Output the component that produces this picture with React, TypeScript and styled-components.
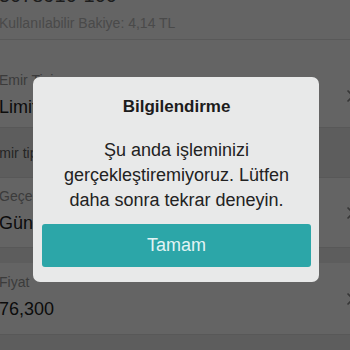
import styled, { createGlobalStyle } from 'styled-components'

const GlobalStyle = createGlobalStyle`
  html, body {
    margin: 0;
    padding: 0;
    width: 350px;
    height: 350px;
    overflow: hidden;
    background: #e8e8e8;
    font-family: 'Liberation Sans', Helvetica, Arial, sans-serif;
  }
`

const Screen = styled.div`
  position: relative;
  width: 350px;
  height: 350px;
  overflow: hidden;
`

const Form = styled.div`
  display: flex;
  flex-direction: column;
  width: 362px;
  margin-left: -1px;
  background: #e8e8e8;
`

const AccountHeader = styled.div`
  height: 40px;
  background: #fafafa;
  border-bottom: 1px solid #dedede;
  box-sizing: border-box;
`

const AccountNumber = styled.div`
  margin-top: -16px;
  font-size: 20px;
  line-height: 22px;
  color: #4a4a4a;
`

const Balance = styled.div`
  margin-top: 9px;
  font-size: 14px;
  line-height: 16px;
  color: #b8b8b8;
`

const Gap = styled.div<{ $h: number }>`
  height: ${p => p.$h}px;
  background: ${p => (p.$h > 20 ? '#fafafa' : '#e8e8e8')};
`

const FieldRow = styled.div<{ $h: number; $shade?: boolean }>`
  display: flex;
  align-items: center;
  justify-content: space-between;
  height: ${p => p.$h}px;
  box-sizing: border-box;
  padding: 0 6px 0 0;
  background: ${p => (p.$shade ? '#e8e8e8' : '#fafafa')};
  border-bottom: 1px solid #dcdcdc;
`

const FieldText = styled.div`
  display: flex;
  flex-direction: column;
  margin-top: -4px;
`

const FieldLabel = styled.span`
  font-size: 14px;
  line-height: 16px;
  color: #959595;
`

const FieldValue = styled.span`
  margin-top: 9px;
  font-size: 18px;
  line-height: 20px;
  color: #1e1e1e;
`

const HintText = styled.span`
  margin-left: -9px;
  font-size: 14px;
  line-height: 16px;
  color: #5c5c5c;
`

const Chevron = () => (
  <svg width="9" height="14" viewBox="0 0 9 14">
    <path d="M1.5 1.5 L7 7 L1.5 12.5" fill="none" stroke="#8a8a8a" strokeWidth="1.6" />
  </svg>
)

const Overlay = styled.div`
  position: absolute;
  inset: 0;
  background: rgba(0, 0, 0, 0.6);
  display: flex;
  justify-content: center;
  align-items: flex-start;
  padding-top: 77px;
`

const Dialog = styled.div`
  width: 286px;
  margin-left: 2px;
  box-sizing: border-box;
  padding: 20px 8px 15px 9px;
  background: #e8e9e9;
  border-radius: 7px;
  display: flex;
  flex-direction: column;
  align-items: stretch;
  text-align: center;
`

const DialogTitle = styled.div`
  font-size: 17px;
  line-height: 20px;
  font-weight: bold;
  color: #1c1c1c;
`

const DialogMessage = styled.div`
  margin-top: 21px;
  font-size: 18px;
  line-height: 25px;
  color: #222;
`

const DialogButton = styled.button`
  margin-top: 11px;
  height: 43px;
  border: none;
  border-radius: 3px;
  background: #2ca6a8;
  color: #e2f4f4;
  font-family: inherit;
  font-size: 18px;
  cursor: pointer;
`

export default function App() {
  return (
    <Screen>
      <GlobalStyle />
      <Form>
        <AccountHeader>
          <AccountNumber>5078910-100</AccountNumber>
          <Balance>Kullanılabilir Bakiye: 4,14 TL</Balance>
        </AccountHeader>
        <Gap $h={25} />
        <FieldRow $h={63}>
          <FieldText>
            <FieldLabel>Emir Tipi</FieldLabel>
            <FieldValue>Limit</FieldValue>
          </FieldText>
          <Chevron />
        </FieldRow>
        <FieldRow $h={50} $shade>
          <HintText>Emir tipi nedir?</HintText>
        </FieldRow>
        <FieldRow $h={70}>
          <FieldText>
            <FieldLabel>Geçerlilik</FieldLabel>
            <FieldValue>Gün</FieldValue>
          </FieldText>
          <Chevron />
        </FieldRow>
        <Gap $h={15} />
        <FieldRow $h={72}>
          <FieldText>
            <FieldLabel>Fiyat</FieldLabel>
            <FieldValue>76,300</FieldValue>
          </FieldText>
          <Chevron />
        </FieldRow>
      </Form>
      <Overlay>
        <Dialog>
          <DialogTitle>Bilgilendirme</DialogTitle>
          <DialogMessage>
            Şu anda işleminizi
            <br />
            gerçekleştiremiyoruz. Lütfen
            <br />
            daha sonra tekrar deneyin.
          </DialogMessage>
          <DialogButton>Tamam</DialogButton>
        </Dialog>
      </Overlay>
    </Screen>
  )
}
